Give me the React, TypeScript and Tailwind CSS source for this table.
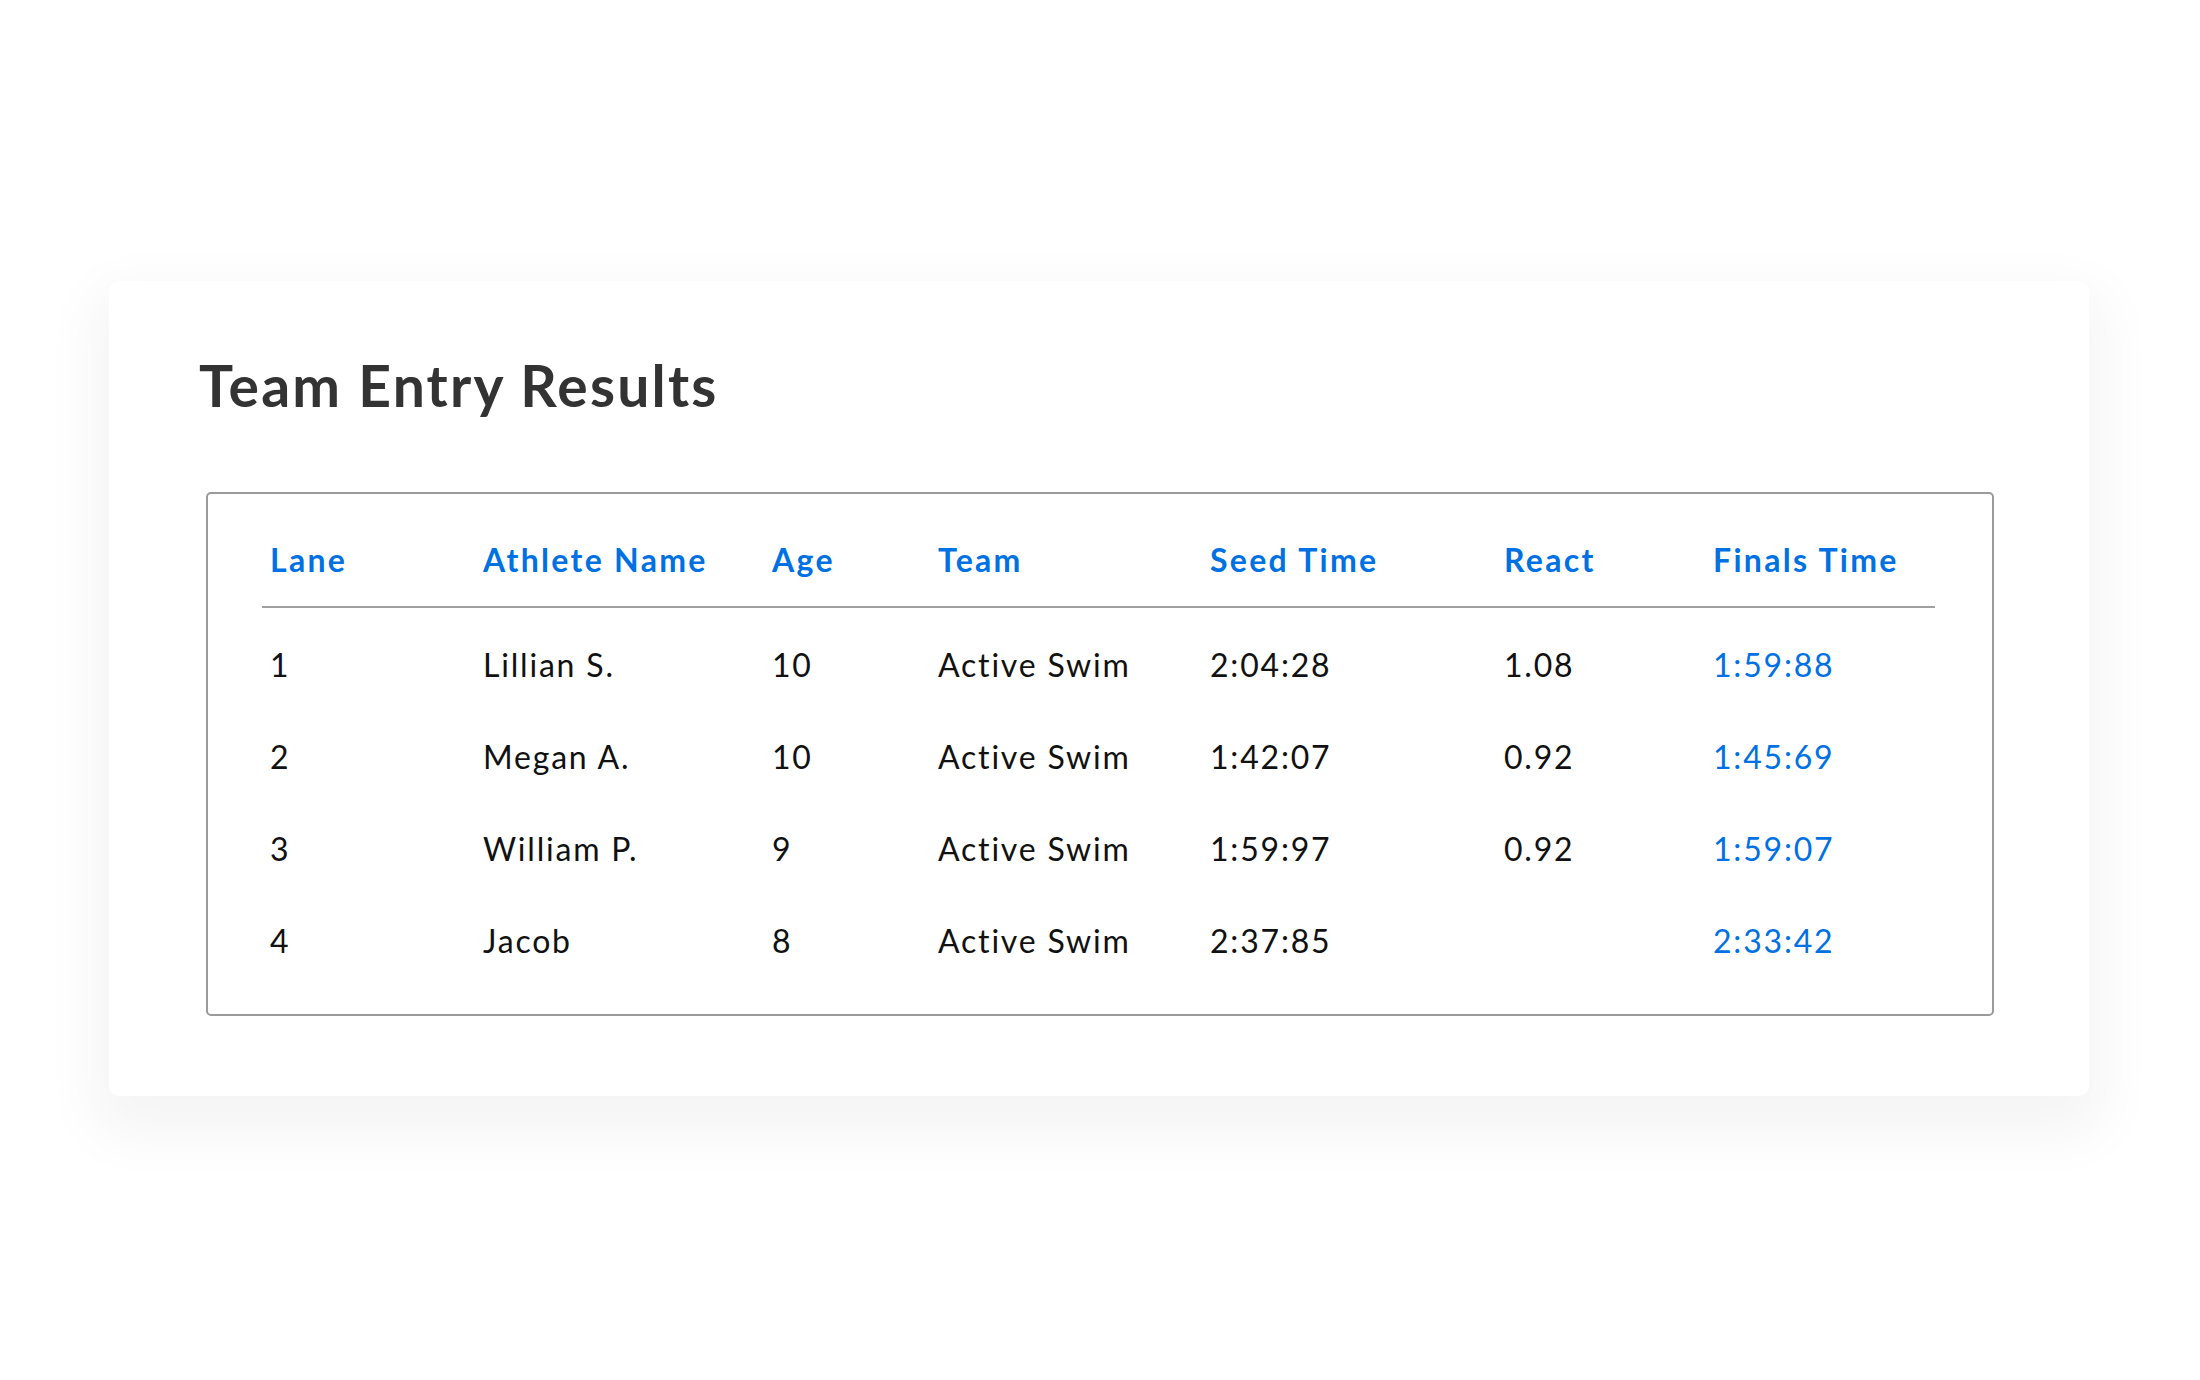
import React from "react";

const rows = [
  { lane: "1", name: "Lillian S.", age: "10", team: "Active Swim", seed: "2:04:28", react: "1.08", finals: "1:59:88" },
  { lane: "2", name: "Megan A.", age: "10", team: "Active Swim", seed: "1:42:07", react: "0.92", finals: "1:45:69" },
  { lane: "3", name: "William P.", age: "9", team: "Active Swim", seed: "1:59:97", react: "0.92", finals: "1:59:07" },
  { lane: "4", name: "Jacob", age: "8", team: "Active Swim", seed: "2:37:85", react: "", finals: "2:33:42" },
];

const cols = "grid grid-cols-[213px_289px_166px_272px_294px_209px_1fr]";

export default function App() {
  return (
    <div
      className="w-[2200px] h-[1380px] bg-white pt-[281px] pl-[109px]"
      style={{ fontFamily: "Lato, 'Open Sans', Arial, sans-serif" }}
    >
      <div className="w-[1980px] bg-white rounded-[10px] shadow-[0_24px_56px_16px_rgba(0,0,0,0.045)] pt-[76px] pb-[80px] pl-[90px]">
        <h1 className="text-[57px] leading-none font-bold text-[#333333] tracking-[2.2px]">
          Team Entry Results
        </h1>
        <div className="mt-[78px] ml-[7px] w-[1788px] border-2 border-[#9a9a9a] rounded-[5px] pt-[50px] pb-[57px] pl-[54px] pr-[57px]">
          <div className={`${cols} pl-[8px] pb-[30px] border-b-2 border-[#a0a0a0] text-[32px] leading-[32px] font-bold tracking-[2.3px] text-[#0071e3]`}>
            <div>Lane</div>
            <div>Athlete Name</div>
            <div>Age</div>
            <div>Team</div>
            <div>Seed Time</div>
            <div>React</div>
            <div>Finals Time</div>
          </div>
          <div className="flex flex-col gap-[60px] pt-[41px]">
            {rows.map((r) => (
              <div key={r.lane} className={`${cols} pl-[8px] text-[32px] leading-[32px] tracking-[1.8px] text-[#111111]`}>
                <div>{r.lane}</div>
                <div>{r.name}</div>
                <div>{r.age}</div>
                <div>{r.team}</div>
                <div>{r.seed}</div>
                <div>{r.react}</div>
                <div className="text-[#0071e3]">{r.finals}</div>
              </div>
            ))}
          </div>
        </div>
      </div>
    </div>
  );
}
